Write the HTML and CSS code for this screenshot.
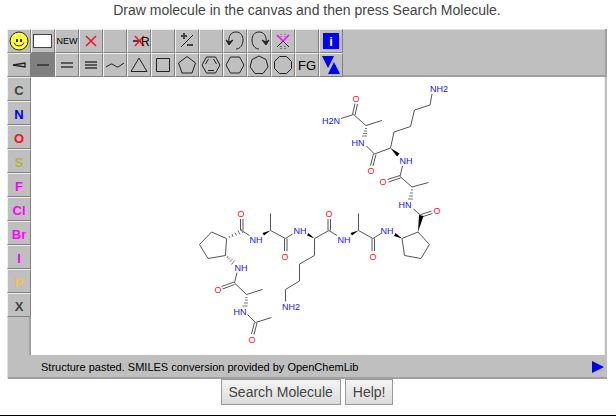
FILE: index.html
```
<!DOCTYPE html>
<html lang="en">
<head>
<meta charset="utf-8">
<title>Molecule Search</title>
<link rel="stylesheet" href="styles.css">
</head>
<body>
<main class="wrap">
    <p class="intro">Draw molecule in the canvas and then press Search Molecule.</p>
    <div class="editor">
        <div class="toolbar">
            <div class="tools">
                <button class="cell" aria-label="SMILES"><svg viewBox="1 1 22 22"><circle cx="12" cy="12" r="9" fill="#ff3"/><path d="M7 13.5Q8 17 12 17T17 13.5"/><path d="M10 10v3M14 10v3" stroke-width="2"/></svg></button>
                <button class="cell" aria-label="Clear"><svg viewBox="1 1 22 22"><rect x="2.5" y="5.5" width="18" height="13" fill="#fff" stroke="#444"/></svg></button>
                <button class="cell small">NEW</button>
                <button class="cell" aria-label="Delete"><svg viewBox="1 1 22 22"><path class="red" d="M7 7l10 10M17 7L7 17"/></svg></button>
                <button class="cell" aria-label="Blank"></button>
                <button class="cell" aria-label="Delete group"><svg viewBox="1 1 22 22"><path class="bond" d="M6 12h8"/><path class="red" d="M8 7l9 10M17 7L8 17"/><text x="14" y="17" font-size="12">R</text></svg></button>
                <button class="cell" aria-label="Blank"></button>
                <button class="cell" aria-label="Charge"><svg viewBox="1 1 22 22"><path d="M6 18L18 6"/><path class="bond" d="M6 7h6M9 4v6M12 16h6"/></svg></button>
                <button class="cell" aria-label="Blank"></button>
                <button class="cell" aria-label="Undo"><svg viewBox="1 1 22 22"><path d="M6 14C5 7 8 3 13 3c5 0 7 4 7 8 0 5-3 9-7 9"/><path class="solid" d="M3 11l3 5 4-5-4 2z"/></svg></button>
                <button class="cell" aria-label="Redo"><svg viewBox="1 1 22 22"><path d="M19 14c1-7-2-11-7-11-5 0-7 4-7 8 0 5 3 9 7 9"/><path class="solid" d="M22 11l-3 5-4-5 4 2z"/></svg></button>
                <button class="cell" aria-label="Query"><svg viewBox="1 1 22 22"><path d="M6 18l6-6 6 6"/><path class="dots" d="M10 17v3M14 17v3"/><path class="pink" d="M6 6l6 6 6-6"/><path class="pink dots" d="M10 5v3M14 5v3"/></svg></button>
                <button class="cell" aria-label="Blank"></button>
                <button class="cell" aria-label="Info"><svg viewBox="1 1 22 22"><path class="blue" d="M4 4h16v16H4z"/><text class="info" x="12" y="17">i</text></svg></button>

                <button class="cell" aria-label="Stereo bond"><svg viewBox="1 1 22 22"><path d="M6 12l12-2v4z" stroke-width="1.3"/></svg></button>
                <button class="cell active" aria-label="Single bond"><svg viewBox="1 1 22 22"><path class="bond" d="M6 12h12"/></svg></button>
                <button class="cell" aria-label="Double bond"><svg viewBox="1 1 22 22"><path class="bond light" d="M6 10h12M6 14h12"/></svg></button>
                <button class="cell" aria-label="Triple bond"><svg viewBox="1 1 22 22"><path class="bond light" d="M6 9h12M6 12h12M6 15h12"/></svg></button>
                <button class="cell" aria-label="Chain"><svg viewBox="1 1 22 22"><path d="M3 14l5-3h1l5 3h1l6-4"/></svg></button>
                <button class="cell" aria-label="Cyclopropane"><svg viewBox="1 1 22 22"><path d="M12 5l8 13.5H4z"/></svg></button>
                <button class="cell" aria-label="Cyclobutane"><svg viewBox="1 1 22 22"><path d="M5.5 5.5h13v13h-13z"/></svg></button>
                <button class="cell" aria-label="Cyclopentane"><svg viewBox="1 1 22 22"><path d="M12 3.5l8.5 6.5-3.5 10H7L3.5 10z"/></svg></button>
                <button class="cell" aria-label="Benzene"><svg viewBox="1 1 22 22"><path d="M3 12l4.5-8h9l4.5 8-4.5 8h-9zM9 17.5h6M6.5 11l3-5M17.5 11l-3-5"/></svg></button>
                <button class="cell" aria-label="Cyclohexane"><svg viewBox="1 1 22 22"><path d="M3 12l4.5-8h9l4.5 8-4.5 8h-9z"/></svg></button>
                <button class="cell" aria-label="Cycloheptane"><svg viewBox="1 1 22 22"><path d="M12 3l7 3.5 2 7.5-5 6.5H8L3 14l2-7.5z"/></svg></button>
                <button class="cell" aria-label="Cyclooctane"><svg viewBox="1 1 22 22"><path d="M8.5 3.5h7l5 5v7l-5 5h-7l-5-5v-7z"/></svg></button>
                <button class="cell group">FG</button>
                <button class="cell" aria-label="Swap"><svg viewBox="1 1 22 22"><path class="blue" d="M3 3h12L9 15zM9 21h12L15 9z"/></svg></button>
            </div>
        </div>

        <div class="work">
            <div class="atoms">
                <button class="cell atom">C</button>
                <button class="cell atom n">N</button>
                <button class="cell atom o">O</button>
                <button class="cell atom s">S</button>
                <button class="cell atom hal">F</button>
                <button class="cell atom hal">Cl</button>
                <button class="cell atom hal">Br</button>
                <button class="cell atom hal">I</button>
                <button class="cell atom p">P</button>
                <button class="cell atom">X</button>
            </div>
            <div class="canvas">
                <svg class="molecule" viewBox="31 77 574 278" role="img" aria-label="Molecule">
                    <!-- skeleton -->
                    <g class="lines">
                        <path d="M341 118.5L353.5 114.5L366 125.5L382 120.5M352.5 114.5L355 103.5M355 115L357.5 104"/>
                        <path d="M366.5 146L374.5 154L390.5 148L394 132L410.5 126.5L414.5 110L430 105L432 94"/>
                        <path d="M373.5 154L370.5 165.5M376 154.5L373 166"/>
                        <path d="M402.5 166L400 176.5L412 187L428.5 182.5M400 175.5L387.5 179.5M400.5 178L388.5 182"/>
                        <path d="M413.5 209L421 215.5M421 214.5L431.5 211M421.5 217L432.5 213.5"/>
                        <path d="M418 232L429.5 244.5L421 258.5L404.5 255.5L402 238.5z"/>
                        <path d="M381 233.5L373 238.5L358.5 230.5V213.5M372 238.5V251M374.5 238.5V251"/>
                        <path d="M337 235.5L329 230.5L314.5 238.5V255.5L299.5 264V281L285.5 289.5V301.5M328 230.5V219M330.5 230.5V219"/>
                        <path d="M292.5 234L285.5 238.5L270.5 230.5V213.5M284.5 238.5V251M287 238.5V251"/>
                        <path d="M249.5 235.5L241.5 230.5M240.5 230.5V219M243 230.5V219"/>
                        <path d="M226.5 238.5L211.5 232L199.5 244.5L208 258.5L225.5 255.5z"/>
                        <path d="M237 272.5L234.5 283L246.5 294.5L262.5 289.5M234 282L221.5 286.5M234.5 284.5L222.5 289"/>
                        <path d="M247.5 314.5L255.5 322.5L271.5 317.5M254.5 322.5L251.5 334M257 323L254 334.5"/>
                    </g>
                    <!-- stereo bonds -->
                    <g class="wedges">
                        <path d="M390.5 148L399.5 153.5L397 156.5z"/>
                        <path d="M418 232L423.5 216L419 215z"/>
                        <path d="M402 238.5L395.5 233L394 236z"/>
                        <path d="M358.5 230.5L352 235.5L350.5 233z"/>
                        <path d="M314.5 238.5L308.5 233L307 235.5z"/>
                        <path d="M270.5 230.5L264 235.5L262.5 233z"/>
                    </g>
                    <g class="hashes">
                        <path d="M365 128.5h2M364 131h3M363 133.5h4M362 136h5"/>
                        <path d="M411 190h2M410 193h3M409 196h4M408 199h5"/>
                        <path d="M245.5 297.5h2M245 300h3M244 303h4M242.5 306h5"/>
                        <path d="M229 236l1 2M232 234l1 3M235 232.5l1.5 3M238 230.5l2 4M241 229l2 4"/>
                        <path d="M228 256l-1 2M230 257.5l-2 2M232.5 259l-3 3M234.5 260.5l-3 4"/>
                    </g>
                    <g class="nitrogen">
                        <text x="439" y="92">NH2</text>
                        <text x="331" y="124">H2N</text>
                        <text x="358" y="146">HN</text>
                        <text x="406" y="164">NH</text>
                        <text x="405" y="208">HN</text>
                        <text x="387" y="234">NH</text>
                        <text x="344" y="243">NH</text>
                        <text x="300" y="234">NH</text>
                        <text x="256" y="243">NH</text>
                        <text x="241" y="271">NH</text>
                        <text x="291" y="310">NH2</text>
                        <text x="240" y="315">HN</text>
                    </g>
                    <g class="oxygen">
                        <text x="356" y="102">O</text>
                        <text x="371" y="174">O</text>
                        <text x="383" y="185">O</text>
                        <text x="437" y="214">O</text>
                        <text x="373" y="260">O</text>
                        <text x="329" y="217">O</text>
                        <text x="285" y="260">O</text>
                        <text x="241" y="217">O</text>
                        <text x="218" y="293">O</text>
                        <text x="252" y="343">O</text>
                    </g>
                </svg>
            </div>
        </div>

        <div class="status">
            <span>Structure pasted. SMILES conversion provided by OpenChemLib</span>
            <button class="more" aria-label="More"><svg viewBox="0 0 12 12"><path class="blue" d="M0 0l12 6-12 6z"/></svg></button>
        </div>
    </div>
    <div class="actions">
        <button class="btn">Search Molecule</button>
        <button class="btn">Help!</button>
    </div>
</main>
<hr class="rule">
</body>
</html>
```

FILE: styles.css
```
* {
    box-sizing: border-box;
    margin: 0;
    padding: 0;
}

body {
    background: #fff;
    color: #444;
    font-family: "Liberation Sans", Arial, sans-serif;
    font-size: 14px;
}

button {
    font-family: inherit;
    cursor: pointer;
}

.wrap {
    padding: 0 9px 10px 7px;
}

.intro {
    height: 29px;
    line-height: 20px;
    text-align: center;
}

.editor {
    color: #000;
}

.toolbar {
    background: #bfbfbf;
    border-right: 2px solid #a0a0a0;
    box-shadow: inset 0 1px #dfdfdf, inset 0 -2px #a0a0a0;
}

.tools {
    display: grid;
    grid-template-columns: repeat(14, 24px);
}

.cell {
    display: flex;
    align-items: center;
    justify-content: center;
    width: 24px;
    height: 24px;
    background: #bfbfbf;
    border: 1px solid;
    border-color: #f0f0f0 #808080 #808080 #f0f0f0;
    color: #000;
}

.cell svg {
    display: block;
    flex: none;
    width: 22px;
    height: 22px;
    fill: none;
    stroke: #222;
}

.cell text {
    fill: #000;
    stroke: none;
}

.cell .info {
    fill: #fff;
    font-size: 13px;
    font-weight: bold;
    text-anchor: middle;
}

.cell .red {
    stroke: #ff0d20;
    stroke-width: 1.5;
}

.cell .pink {
    stroke: #f0f;
    stroke-width: 1.5;
}

.cell .dots {
    stroke-width: 1;
    stroke-dasharray: 1 1;
}

.cell .bond {
    stroke: #444;
    stroke-width: 2;
}

.cell .light {
    stroke: #5a5a5a;
}

.cell .solid {
    fill: #222;
}

.blue {
    fill: #00f;
    stroke: none;
}

.active {
    background: #808080;
    border-color: #808080;
}

.small {
    font-size: 9px;
}

.group {
    font-size: 13px;
}

.work {
    display: flex;
}

.atoms {
    width: 24px;
    background: #bfbfbf;
    box-shadow: inset 1px 0 #dfdfdf, inset -2px 0 #a0a0a0;
}

.atom {
    padding-top: 2px;
    color: #444;
    font-size: 13px;
    font-weight: bold;
}

.n {
    color: #00f;
}

.o {
    color: #ff0d20;
}

.s {
    color: #b4b432;
}

.hal {
    color: #f0f;
}

.p {
    color: #ffc040;
}

.canvas {
    flex: 1;
    background: #fff;
    border-right: 2px solid #bfbfbf;
    box-shadow: inset -1px 0 #efefef;
}

.molecule {
    display: block;
    width: 100%;
    height: 278px;
    font-size: 9px;
    text-anchor: middle;
}

.lines {
    fill: none;
    stroke: #555;
}

.wedges {
    fill: #000;
}

.hashes {
    stroke: #777;
}

.nitrogen {
    fill: #11f;
}

.oxygen {
    fill: #ff0d20;
}

.status {
    display: flex;
    align-items: center;
    justify-content: space-between;
    height: 24px;
    padding: 0 3px 0 34px;
    background: #bfbfbf;
    box-shadow: inset 1px 0 #dfdfdf, inset 0 -2px #a0a0a0;
    font-size: 11px;
}

.more {
    width: 12px;
    height: 12px;
    background: none;
    border: none;
}

.more svg {
    display: block;
}

.actions {
    display: flex;
    justify-content: center;
    gap: 4px;
}

.btn {
    height: 26px;
    padding: 0 7px;
    background: linear-gradient(#f4f4f4, #dcdcdc);
    border: 1px solid #999;
    color: #444;
    font-size: 14px;
}

.rule {
    border: none;
    border-top: 1px solid #000;
}
```
